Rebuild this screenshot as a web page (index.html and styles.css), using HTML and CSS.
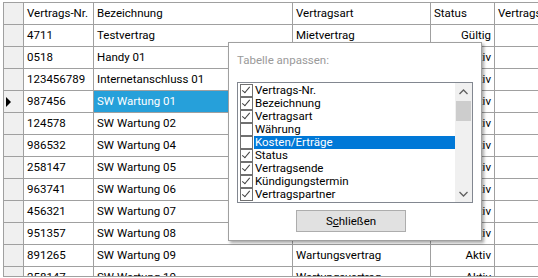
FILE: index.html
```html
<!DOCTYPE html>
<html lang="de">
<head>
<meta charset="UTF-8">
<title>Verträge</title>
<link rel="stylesheet" href="styles.css">
</head>
<body>
<div class="frame">
  <div class="grid">
    <div class="rowhead"></div>
    <div class="cell">Vertrags-Nr.</div>
    <div class="cell">Bezeichnung</div>
    <div class="cell">Vertragsart</div>
    <div class="cell">Status</div>
    <div class="cell">Vertragsende</div>

    <div class="rowhead"></div>
    <div class="cell">4711</div>
    <div class="cell">Testvertrag</div>
    <div class="cell">Mietvertrag</div>
    <div class="cell right">Gültig</div>
    <div class="cell"></div>

    <div class="rowhead"></div>
    <div class="cell">0518</div>
    <div class="cell">Handy 01</div>
    <div class="cell"></div>
    <div class="cell right">Aktiv</div>
    <div class="cell"></div>

    <div class="rowhead"></div>
    <div class="cell">123456789</div>
    <div class="cell">Internetanschluss 01</div>
    <div class="cell"></div>
    <div class="cell right">Aktiv</div>
    <div class="cell"></div>

    <div class="rowhead current"><span class="arrow"></span></div>
    <div class="cell">987456</div>
    <div class="cell selected">SW Wartung 01</div>
    <div class="cell"></div>
    <div class="cell right">Aktiv</div>
    <div class="cell"></div>

    <div class="rowhead"></div>
    <div class="cell">124578</div>
    <div class="cell">SW Wartung 02</div>
    <div class="cell"></div>
    <div class="cell right">Aktiv</div>
    <div class="cell"></div>

    <div class="rowhead"></div>
    <div class="cell">986532</div>
    <div class="cell">SW Wartung 04</div>
    <div class="cell"></div>
    <div class="cell right">Aktiv</div>
    <div class="cell"></div>

    <div class="rowhead"></div>
    <div class="cell">258147</div>
    <div class="cell">SW Wartung 05</div>
    <div class="cell"></div>
    <div class="cell right">Aktiv</div>
    <div class="cell"></div>

    <div class="rowhead"></div>
    <div class="cell">963741</div>
    <div class="cell">SW Wartung 06</div>
    <div class="cell"></div>
    <div class="cell right">Aktiv</div>
    <div class="cell"></div>

    <div class="rowhead"></div>
    <div class="cell">456321</div>
    <div class="cell">SW Wartung 07</div>
    <div class="cell"></div>
    <div class="cell right">Aktiv</div>
    <div class="cell"></div>

    <div class="rowhead"></div>
    <div class="cell">951357</div>
    <div class="cell">SW Wartung 08</div>
    <div class="cell"></div>
    <div class="cell right">Aktiv</div>
    <div class="cell"></div>

    <div class="rowhead"></div>
    <div class="cell">891265</div>
    <div class="cell">SW Wartung 09</div>
    <div class="cell">Wartungsvertrag</div>
    <div class="cell right">Aktiv</div>
    <div class="cell"></div>

    <div class="rowhead"></div>
    <div class="cell">258147</div>
    <div class="cell">SW Wartung 10</div>
    <div class="cell">Wartungsvertrag</div>
    <div class="cell right">Aktiv</div>
    <div class="cell"></div>
  </div>
</div>

<div class="popup">
  <div class="popup-title">Tabelle anpassen:</div>
  <div class="listbox">
    <div class="items">
      <div class="item"><span class="check on"></span><span class="item-text">Vertrags-Nr.</span></div>
      <div class="item"><span class="check on"></span><span class="item-text">Bezeichnung</span></div>
      <div class="item"><span class="check on"></span><span class="item-text">Vertragsart</span></div>
      <div class="item"><span class="check"></span><span class="item-text">Währung</span></div>
      <div class="item active"><span class="check"></span><span class="item-text">Kosten/Erträge</span></div>
      <div class="item"><span class="check on"></span><span class="item-text">Status</span></div>
      <div class="item"><span class="check on"></span><span class="item-text">Vertragsende</span></div>
      <div class="item"><span class="check on"></span><span class="item-text">Kündigungstermin</span></div>
      <div class="item"><span class="check on"></span><span class="item-text">Vertragspartner</span></div>
    </div>
    <div class="scrollbar">
      <div class="sb-btn">
        <svg width="9" height="6" viewBox="0 0 9 6"><path d="M0.5 5 L4.5 1 L8.5 5" fill="none" stroke="#606060" stroke-width="1.3"/></svg>
      </div>
      <div class="sb-thumb"></div>
      <div class="sb-track"></div>
      <div class="sb-btn">
        <svg width="9" height="6" viewBox="0 0 9 6"><path d="M0.5 1 L4.5 5 L8.5 1" fill="none" stroke="#606060" stroke-width="1.3"/></svg>
      </div>
    </div>
  </div>
  <button class="btn" type="button">S<u>c</u>hließen</button>
</div>
</body>
</html>
```

FILE: styles.css
```css
body {
  margin: 0;
  background-color: #ffffff;
  font-family: Roboto, "Noto Sans", sans-serif;
  font-size: 11.5px;
  color: #000000;
  position: relative;
  height: 278px;
  overflow: hidden;
}

.frame {
  margin: 2px 0 0 3px;
  height: 273px;
  overflow: hidden;
  border-top: 1px solid #a0a0a0;
  border-left: 1px solid #a0a0a0;
  border-bottom: 1px solid #a0a0a0;
}

.grid {
  display: grid;
  grid-template-columns: 19px 69px 198px 137px 63px 80px;
  grid-auto-rows: 21px;
  gap: 1px;
  background-color: #a0a0a0;
}

.cell {
  background-color: #ffffff;
  padding: 0 3px;
  line-height: 21px;
  white-space: nowrap;
  overflow: hidden;
}

.cell.right {
  text-align: right;
}

.cell.selected {
  background-color: #26a0da;
  color: #ffffff;
}

.rowhead {
  background-color: #f0f0f0;
  display: flex;
  align-items: center;
}

.arrow {
  width: 0;
  height: 0;
  margin-left: 2px;
  border-top: 5px solid transparent;
  border-bottom: 5px solid transparent;
  border-left: 5px solid #000000;
}

/* popup "Tabelle anpassen" */
.popup {
  position: absolute;
  left: 228px;
  top: 42px;
  width: 244px;
  height: 197px;
  background-color: #ffffff;
  border: 1px solid #a0a0a0;
  box-shadow: 2px 2px 3px rgba(0, 0, 0, 0.35);
  padding: 0 0 0 8px;
}

.popup-title {
  color: #9a9a9a;
  margin-top: 9px;
  line-height: 16px;
}

.listbox {
  margin-top: 14px;
  width: 234px;
  height: 119px;
  border: 1px solid #828790;
  display: flex;
  background-color: #ffffff;
}

.items {
  flex: 1;
  padding-top: 1px;
}

.item {
  display: flex;
  align-items: center;
  height: 13px;
  line-height: 13px;
}

.check {
  width: 11px;
  height: 11px;
  border: 1px solid #707070;
  margin-left: 2px;
  background-color: #ffffff;
  position: relative;
}

.check.on::after {
  content: "";
  position: absolute;
  left: 3px;
  top: 0px;
  width: 3px;
  height: 7px;
  border-right: 1.5px solid #404040;
  border-bottom: 1.5px solid #404040;
  transform: rotate(40deg);
}

.item-text {
  flex: 1;
  margin-left: 1px;
  padding-left: 1px;
  height: 13px;
  white-space: nowrap;
}

.item.active .item-text {
  background-color: #0078d7;
  color: #ffffff;
}

.scrollbar {
  width: 17px;
  background-color: #f0f0f0;
  display: flex;
  flex-direction: column;
}

.sb-btn {
  height: 17px;
  display: flex;
  align-items: center;
  justify-content: center;
}

.sb-thumb {
  height: 20px;
  margin: 1px 1px 0 1px;
  background-color: #cdcdcd;
}

.sb-track {
  flex: 1;
}

.btn {
  display: block;
  margin: 7px 0 0 59px;
  width: 110px;
  height: 22px;
  background-color: #e1e1e1;
  border: 1px solid #adadad;
  font-family: Roboto, "Noto Sans", sans-serif;
  font-size: 11.5px;
  color: #000000;
  padding: 0;
}
```
